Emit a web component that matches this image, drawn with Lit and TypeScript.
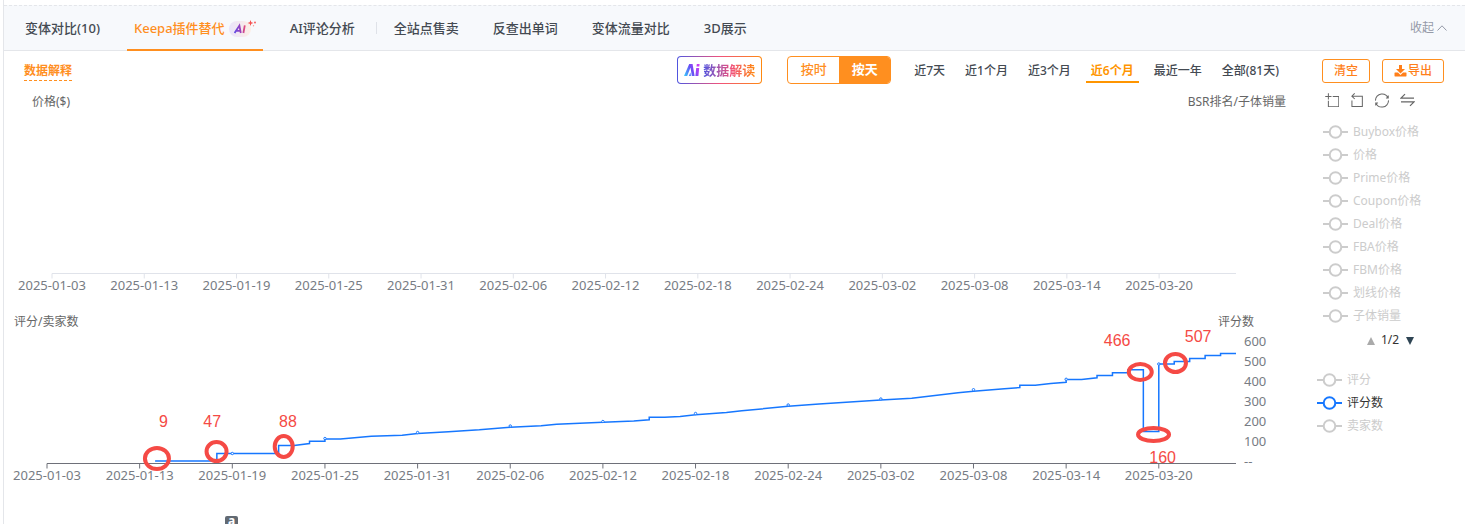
import { LitElement, html, svg, css } from "lit";
import { customElement, state } from "lit/decorators.js";
import { classMap } from "lit/directives/class-map.js";

const DATES = [
  "2025-01-03", "2025-01-13", "2025-01-19", "2025-01-25", "2025-01-31", "2025-02-06", "2025-02-12",
  "2025-02-18", "2025-02-24", "2025-03-02", "2025-03-08", "2025-03-14", "2025-03-20",
];
const DAYS = 77;
const DAYS_PER_TICK = 6;
const pct = (day: number) => `${(day / DAYS) * 100}%`;

/* [day index, height in the plot] */
const LINE: [number, number][] = [
  [7, 130], [11, 130], [11, 122.5], [15, 122.5], [15, 114.5], [16, 114.5], [17, 112.5], [17, 110.2],
  [18, 110.2], [18, 108], [19, 108], [21, 105.3], [23, 104.2], [24, 102.5], [26, 100.7], [28, 98.8],
  [30, 96.2], [32, 94.8], [33, 93.2], [36, 91.3], [38, 90], [39, 88.8], [39, 86.2], [40, 86.2],
  [41, 85.5], [42, 83.8], [44, 81.4], [45, 79.8], [48, 75.3], [50, 73], [54, 69], [56, 67.2],
  [59, 61.7], [60, 60.3], [62, 57.7], [63, 56.5], [63, 54.3], [64, 54.3], [65, 52.5], [66, 51.3],
  [66, 48.6], [67, 48.5], [68, 46.8], [68, 44.5], [69, 44.5], [69, 41.7], [70, 41.7], [70, 38.7],
  [71, 38.7], [71, 100.5], [72, 100.5], [72, 33], [73, 33], [73, 30.5], [74, 30.5], [74, 27.5],
  [75, 27.5], [75, 24.5], [76, 24.5], [76, 22.5], [77, 22.5],
];
const DOTS: [number, number][] = [
  [12, 122.5], [18, 107.5], [24, 101.5], [30, 95], [36, 90.5], [42, 82.5], [48, 74], [54, 68],
  [60, 58.7], [66, 48.3], [72, 33],
];
const RINGS = [
  { day: 7.12, y: 127.5, rx: 12, ry: 10.5 },
  { day: 10.98, y: 120.5, rx: 10, ry: 9.5 },
  { day: 15.33, y: 115.5, rx: 9, ry: 10.5 },
  { day: 70.8, y: 41, rx: 11.5, ry: 8 },
  { day: 73.08, y: 32, rx: 10.5, ry: 9 },
  { day: 71.66, y: 103.5, rx: 15.5, ry: 6.5 },
];
const NOTES = [
  { day: 7.54, y: 96, text: "9" },
  { day: 10.7, y: 96, text: "47" },
  { day: 15.6, y: 96, text: "88" },
  { day: 69.3, y: 15, text: "466" },
  { day: 74.55, y: 11, text: "507" },
  { day: 72.25, y: 132, text: "160" },
];

@customElement("app-root")
export class AppRoot extends LitElement {
  @state() private tab = "keepa";
  @state() private unit = "day";
  @state() private range = "近6个月";
  @state() private shown = new Set<string>(["评分数"]);

  static styles = css`
    :host {
      display: block;
      height: 100vh;
      overflow: hidden;
      background: #fff;
      color: #444a52;
      font: 12px/22px "Noto Sans", "Noto Sans CJK SC", sans-serif;
    }
    * { box-sizing: border-box; }
    button { font: inherit; color: inherit; background: none; border: 0; padding: 0; margin: 0; cursor: pointer; }
    svg { display: block; }
    .panel { margin-left: 3px; padding-top: 5px; border-left: 1px solid #e4e6ea; min-height: 100vh; }

    .head {
      display: flex; justify-content: space-between; height: 46px; padding: 0 18px 0 4px;
      background: #f7f9fc; border-top: 1px dashed #e4e6ea; border-bottom: 1px solid #e4e6ea;
    }
    .tabs { display: flex; align-items: center; }
    .tab {
      position: relative; display: flex; align-items: center; gap: 4px; height: 45px; padding: 0 17px;
      font-size: 13px; font-weight: 500; white-space: nowrap;
    }
    .tab.on { color: #ff8f1f; }
    .tab.on::after { content: ""; position: absolute; left: 10px; right: 10px; bottom: 0; height: 2px; background: #ff8f1f; }
    .split { width: 1px; height: 12px; margin-left: 4px; background: #dfe2e8; }
    .fold { display: flex; align-items: center; gap: 3px; color: #959aa8; white-space: nowrap; }

    .bar { display: flex; align-items: center; height: 38px; padding: 0 21px 0 20px; white-space: nowrap; font-weight: 500; }
    .explain { padding-top: 2px; color: #ff8f1f; font-weight: 700; line-height: 18px; text-decoration: none; border-bottom: 1px dashed #ff8f1f; }
    .ai {
      display: flex; align-items: center; gap: 3px; height: 28px; margin-left: auto; padding: 0 6px; border-radius: 4px;
      border: 1px solid transparent; font-size: 13px; font-weight: 700;
      background: linear-gradient(#fff, #fff) padding-box, linear-gradient(90deg, #4f55e0, #f0527c 50%, #ff8a10) border-box;
    }
    .aitext { background: linear-gradient(90deg, #4f55e0, #f0527c 55%, #ff8a10); background-clip: text; -webkit-background-clip: text; color: transparent; }
    .seg { display: flex; height: 28px; margin-left: 25px; border: 1px solid #ff8f1f; border-radius: 4px; overflow: hidden; }
    .seg button { width: 51px; height: 26px; padding-bottom: 2px; font-size: 13px; color: #ff8f1f; }
    .seg button.on { background: #ff8f1f; color: #fff; font-weight: 700; }
    .ranges { display: flex; gap: 10px; margin-left: 18px; }
    .range { height: 26px; padding: 4px 5px 0; line-height: 20px; border-bottom: 2px solid transparent; }
    .range.on { color: #ff9500; border-color: #ff9500; font-weight: 600; }
    .acts { display: flex; gap: 12px; margin-left: 38px; padding-top: 2px; }
    .act {
      display: flex; align-items: center; justify-content: center; gap: 1px; height: 24px; padding: 0 11px;
      border: 1px solid #ff8f1f; border-radius: 3px; color: #ff7f1a;
    }

    .content { display: grid; grid-template-columns: minmax(0, 1fr) 149px; }
    .caps { display: flex; justify-content: space-between; padding-top: 2px; color: #666; }
    .caps.top { padding-right: 30px; padding-left: 28px; }
    .caps.low { padding-right: 62px; padding-left: 10px; }
    .plot { width: 100%; overflow: visible; }
    .upper { padding: 0 80px 0 48px; }
    .lower { padding: 0 80px 0 43px; }
    .date { font-size: 13px; fill: #777c84; text-anchor: middle; }
    .val { font-size: 13px; fill: #777c84; }
    .note { font: 16px "Liberation Sans", Arial, sans-serif; fill: #f54a45; text-anchor: middle; }
    .ring { fill: none; stroke: #f54a45; stroke-width: 4; }
    .pale { stroke: #e0e3ea; }
    .dark { stroke: #6e7079; }
    .line { fill: none; stroke: #1677ff; stroke-width: 1.5; vector-effect: non-scaling-stroke; }
    .dot { fill: #fff; stroke: #1677ff; }

    .tools { display: flex; align-items: center; height: 22px; gap: 11px; padding-left: 9px; }
    .tools svg { fill: none; stroke: #666; }
    .legend { list-style: none; margin: 0; padding: 0; }
    .first { margin-top: 9px; padding-left: 7px; }
    .second { margin-top: 15px; padding-left: 1px; }
    .key { display: flex; align-items: center; gap: 5px; height: 23px; color: #ccc; white-space: nowrap; }
    .key.on { color: #333; }
    .mark { fill: #fff; stroke: #ccc; stroke-width: 2; }
    .key.on .mark { stroke: #1677ff; }
    .pager { display: flex; align-items: center; gap: 6px; height: 26px; padding-left: 51px; color: #333; }
    .pager button:last-child { margin-left: 1px; }
    .foot { display: flex; padding: 23px 0 0 221px; }
    .shop {
      width: 13px; height: 13px; border-radius: 2px; background: #626a73; color: #fff;
      font-size: 12px; line-height: 10px; font-weight: 700; text-align: center; text-decoration: none;
    }
  `;

  private toggle(name: string) {
    const next = new Set(this.shown);
    next.has(name) ? next.delete(name) : next.add(name);
    this.shown = next;
  }

  private tabButton(id: string, label: string, extra: unknown = "") {
    return html`<button class=${classMap({ tab: true, on: this.tab === id })} role="tab"
      aria-selected=${this.tab === id} @click=${() => (this.tab = id)}>${label}${extra}</button>`;
  }

  private key(name: string) {
    return html`<li><button class=${classMap({ key: true, on: this.shown.has(name) })}
      aria-pressed=${this.shown.has(name)} @click=${() => this.toggle(name)}>
      <svg class="mark" width="25" height="14" viewBox="0 0 25 14"><path d="M0 7H25" /><circle cx="12.5" cy="7" r="5.8" /></svg>
      <span>${name}</span></button></li>`;
  }

  private axis(y: number, tone: string, labelY: number) {
    return svg`
      <line class=${tone} x1="0" x2="100%" y1=${y} y2=${y} />
      ${DATES.map((d, i) => svg`
        <line class=${tone} x1=${pct(i * DAYS_PER_TICK)} x2=${pct(i * DAYS_PER_TICK)} y1=${y} y2=${y + 5} />
        <text class="date" x=${pct(i * DAYS_PER_TICK)} y=${labelY}>${d}</text>`)}`;
  }

  private badge() {
    return html`<svg width="27" height="20" viewBox="0 0 27 20" aria-label="AI">
      <defs>
        <linearGradient id="pill"><stop stop-color="#e9e3fb" /><stop offset="1" stop-color="#fdeee4" /></linearGradient>
        <linearGradient id="mark" gradientUnits="userSpaceOnUse" x1="5" y1="0" x2="17" y2="0"><stop stop-color="#5a4be8" /><stop offset=".6" stop-color="#a43fb5" /><stop offset="1" stop-color="#f3506a" /></linearGradient>
      </defs>
      <rect x="0" y="3" width="22" height="16" rx="8" fill="url(#pill)" />
      <path d="M5.6 15 10.4 7.6 11.8 15M7.6 12.8H11.4M15.8 7.4 14.4 15" fill="none" stroke="url(#mark)" stroke-width="1.8" />
      <path d="M21.5 2 22.3 4.2 24.5 5 22.3 5.8 21.5 8 20.7 5.8 18.5 5 20.7 4.2Z" fill="#f5504f" />
      <circle cx="26" cy="4.5" r=".9" fill="#f5504f" /><circle cx="24.5" cy="7.8" r=".7" fill="#f79a8c" />
    </svg>`;
  }

  render() {
    const path = LINE.map(([x, y], i) => `${i ? "L" : "M"}${x} ${y}`).join("");
    return html`
      <div class="panel">
        <header class="head">
          <div class="tabs" role="tablist">
            ${this.tabButton("variant", "变体对比(10)")}
            ${this.tabButton("keepa", "Keepa插件替代", this.badge())}
            ${this.tabButton("review", "AI评论分析")}
            <span class="split"></span>
            ${this.tabButton("sites", "全站点售卖")}
            ${this.tabButton("words", "反查出单词")}
            ${this.tabButton("traffic", "变体流量对比")}
            ${this.tabButton("three", "3D展示")}
          </div>
          <button class="fold">收起
            <svg width="10" height="10" viewBox="0 0 10 10" fill="none" stroke="#959aa8"><path d="M.5 7.5 5 2.8 9.5 7.5" /></svg>
          </button>
        </header>

        <div class="bar">
          <a class="explain" href="#explain">数据解释</a>
          <button class="ai">
            <svg width="16" height="14" viewBox="0 0 16 14">
              <defs><linearGradient id="spark" gradientUnits="userSpaceOnUse" x1="0" y1="12" x2="16" y2="4"><stop stop-color="#35c8fb" /><stop offset=".5" stop-color="#6a4df5" /><stop offset="1" stop-color="#d43cf5" /></linearGradient></defs>
              <path d="M0 13 5.2 1H8.6L10.6 13H7.8L6.5 4.6 3.2 13ZM4.8 13 6.4 9.6 7 13ZM12.2 5H15.2L14.4 13H11.4ZM12.8 1H15.6L15.3 3.6H12.5Z" fill="url(#spark)" />
            </svg>
            <span class="aitext">数据解读</span>
          </button>
          <div class="seg">
            <button class=${classMap({ on: this.unit === "hour" })} @click=${() => (this.unit = "hour")}>按时</button>
            <button class=${classMap({ on: this.unit === "day" })} @click=${() => (this.unit = "day")}>按天</button>
          </div>
          <div class="ranges">
            ${["近7天", "近1个月", "近3个月", "近6个月", "最近一年", "全部(81天)"].map(
              (r) => html`<button class=${classMap({ range: true, on: this.range === r })} @click=${() => (this.range = r)}>${r}</button>`
            )}
          </div>
          <div class="acts">
            <button class="act">清空</button>
            <button class="act">
              <svg width="13" height="12" viewBox="0 0 13 12" fill="#ff7f1a"><path d="M5 0H8V4H11L6.5 8.6 2 4H5ZM1 7.6H4L6.5 10 9 7.6H12Q12.5 7.6 12.5 8.2V10.8Q12.5 11.5 12 11.5H1Q.5 11.5 .5 10.8V8.2Q.5 7.6 1 7.6Z" /></svg>
              导出
            </button>
          </div>
        </div>

        <div class="content">
          <main>
            <div class="caps top"><span>价格($)</span><span>BSR排名/子体销量</span></div>
            <div class="upper">
              <svg class="plot" height="196">${this.axis(160.5, "pale", 177)}</svg>
            </div>
            <div class="caps low"><span>评分/卖家数</span><span>评分数</span></div>
            <div class="lower">
              <svg class="plot" height="160">
                ${this.axis(130.5, "dark", 147)}
                <svg y="-2" width="100%" height="160" viewBox="0 0 77 160" preserveAspectRatio="none"><path class="line" d=${path} /></svg>
                ${DOTS.map(([d, y]) => svg`<circle class="dot" cx=${pct(d)} cy=${y - 2} r="1.2" />`)}
                ${["600", "500", "400", "300", "200", "100", "--"].map(
                  (v, i) => svg`<svg x="100%" y=${i * 20} overflow="visible"><text class="val" x="8" y="13">${v}</text></svg>`
                )}
                ${RINGS.map((r) => svg`<ellipse class="ring" cx=${pct(r.day)} cy=${r.y - 2} rx=${r.rx} ry=${r.ry} />`)}
                ${NOTES.map((n) => svg`<text class="note" x=${pct(n.day)} y=${n.y - 2}>${n.text}</text>`)}
              </svg>
            </div>
          </main>
          <aside>
            <div class="tools">
              <button aria-label="区域缩放"><svg width="14" height="14" viewBox="-1 -1 60 60" stroke-width="4.3"><path d="M0,13.5h26.9 M13.5,26.9V0 M32.1,13.5H58V58H13.5 V32.1" /></svg></button>
              <button aria-label="区域缩放还原"><svg width="14" height="14" viewBox="2 0 60 60" stroke-width="4.3"><path d="M22,1.4L9.9,13.5l12.3,12.3 M10.3,13.5H54.9v44.6 H10.3v-26" /></svg></button>
              <button aria-label="还原"><svg width="14" height="15" viewBox="0 0 60 60" stroke-width="4.3"><path d="M47,18.9h9.8V8.7 M56.3,20.1 C52.1,9,40.5,0.6,26.8,2.1C12.6,3.7,1.6,16.2,2.1,30.6 M13,41.1H3.1v10.2 M3.7,39.9c4.2,11.1,15.8,19.5,29.5,18 c14.2-1.6,25.2-14.1,24.7-28.5" /></svg></button>
              <button aria-label="切换"><svg width="15" height="14" viewBox="0 0 15 14" stroke-width="1.2"><path d="M5 1.2 1 5.2H14M1 8.8H14L10 12.8" /></svg></button>
            </div>
            <ul class="legend first">
              ${["Buybox价格", "价格", "Prime价格", "Coupon价格", "Deal价格", "FBA价格", "FBM价格", "划线价格", "子体销量"].map((n) => this.key(n))}
            </ul>
            <div class="pager">
              <button aria-label="上一页"><svg width="8" height="9" viewBox="0 0 8 9" fill="#aaa"><path d="M4 1 8 9H0Z" /></svg></button>
              <span>1/2</span>
              <button aria-label="下一页"><svg width="8" height="9" viewBox="0 0 8 9" fill="#2f4554"><path d="M0 1H8L4 9Z" /></svg></button>
            </div>
            <ul class="legend second">
              ${["评分", "评分数", "卖家数"].map((n) => this.key(n))}
            </ul>
          </aside>
        </div>
        <footer class="foot"><a class="shop" href="#amazon">a</a></footer>
      </div>
    `;
  }
}
